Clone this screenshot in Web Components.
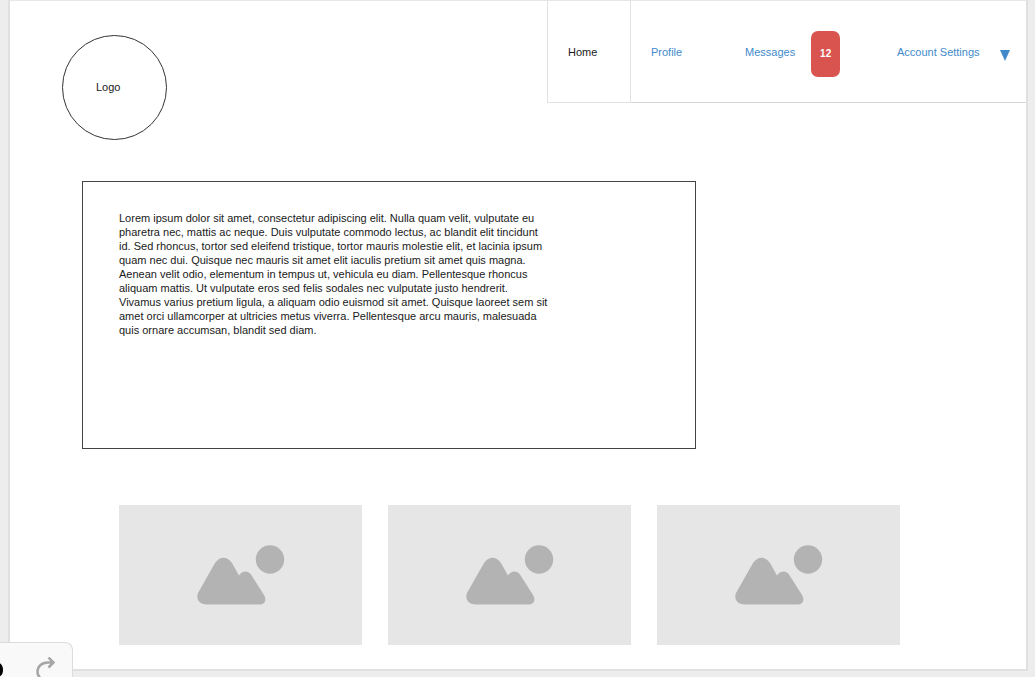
<!DOCTYPE html>
<html lang="en">
<head>
<meta charset="utf-8">
<title>Wireframe</title>
<style>
  body { margin: 0; background: #ededed; font: 11px/14px "Liberation Sans", Arial, sans-serif; color: #1a1a1a; }
</style>
</head>
<body>
<wire-sheet>
  <wire-header>
    <wire-logo>Logo</wire-logo>
    <wire-nav>
      <wire-tab href="#home" current>Home</wire-tab>
      <wire-tab href="#profile">Profile</wire-tab>
      <wire-tab href="#messages">Messages<wire-badge slot="extra">12</wire-badge></wire-tab>
      <wire-tab href="#account" menu>Account Settings</wire-tab>
    </wire-nav>
  </wire-header>
  <wire-panel>Lorem ipsum dolor sit amet, consectetur adipiscing elit. Nulla quam velit, vulputate eu pharetra nec, mattis ac neque. Duis vulputate commodo lectus, ac blandit elit tincidunt id. Sed rhoncus, tortor sed eleifend tristique, tortor mauris molestie elit, et lacinia ipsum quam nec dui. Quisque nec mauris sit amet elit iaculis pretium sit amet quis magna. Aenean velit odio, elementum in tempus ut, vehicula eu diam. Pellentesque rhoncus aliquam mattis. Ut vulputate eros sed felis sodales nec vulputate justo hendrerit. Vivamus varius pretium ligula, a aliquam odio euismod sit amet. Quisque laoreet sem sit amet orci ullamcorper at ultricies metus viverra. Pellentesque arcu mauris, malesuada quis ornare accumsan, blandit sed diam.</wire-panel>
  <wire-gallery>
    <wire-picture></wire-picture>
    <wire-picture></wire-picture>
    <wire-picture></wire-picture>
  </wire-gallery>
</wire-sheet>
<history-bar></history-bar>
<script>
const define = (name, html, setup) => customElements.define(name, class extends HTMLElement {
  constructor() {
    super();
    const template = document.createElement('template');
    template.innerHTML = html;
    this.attachShadow({ mode: 'open' }).append(template.content.cloneNode(true));
  }
  connectedCallback() { if (setup) setup(this); }
});

define('wire-sheet', `
  <style>
    :host { display: block; box-sizing: border-box; min-height: calc(100vh - 6px); margin: 0 7px 6px 8px;
      background: #fff; border: 2px solid #e0e0e0; border-top: 1px solid #e6e6e6; }
  </style>
  <slot></slot>`);

define('wire-header', `
  <style>
    :host { display: flex; justify-content: space-between; align-items: flex-start; }
  </style>
  <slot></slot>`);

define('wire-logo', `
  <style>
    :host { display: flex; align-items: center; box-sizing: border-box; width: 105px; height: 105px;
      margin: 34px 0 0 52px; padding: 0 0 2px 33px; border: 1px solid #333; border-radius: 50%; }
  </style>
  <slot></slot>`);

define('wire-nav', `
  <style>
    nav { display: grid; grid-template-columns: 84px 94px 152px 149px; height: 102px; }
  </style>
  <nav aria-label="Main"><slot></slot></nav>`);

define('wire-tab', `
  <style>
    :host { display: flex; box-sizing: border-box; align-items: center; padding-left: 20px; border-bottom: 1px solid #d5d5d5; }
    :host([current]) { border: 1px solid #e2e2e2; border-top: 0; }
    a { color: #428bca; text-decoration: none; white-space: nowrap; }
    :host([current]) a { color: #1a1a1a; }
    svg { display: none; width: 10px; height: 11px; margin: 8px 0 0 20px; fill: #428bca; }
    :host([menu]) svg { display: block; }
  </style>
  <a><slot></slot></a>
  <slot name="extra"></slot>
  <svg viewBox="0 0 10 11" aria-hidden="true"><path d="M0 0H10L5 11Z"/></svg>`,
  el => {
    const link = el.shadowRoot.querySelector('a');
    link.href = el.getAttribute('href');
    if (el.hasAttribute('current')) link.setAttribute('aria-current', 'page');
  });

define('wire-badge', `
  <style>
    :host { display: grid; place-items: center; width: 29px; height: 46px; margin: 4px 0 0 16px; border-radius: 7px;
      background: #d9534f; color: #fff; font-size: 10px; font-weight: bold; }
  </style>
  <span><slot></slot></span>`);

define('wire-panel', `
  <style>
    :host { display: block; box-sizing: border-box; width: 614px; max-width: 100%; min-height: 268px;
      margin: 41px 0 0 72px; padding: 29px 36px; border: 1px solid #444; }
    p { max-width: 430px; margin: 0; }
  </style>
  <p><slot></slot></p>`);

define('wire-gallery', `
  <style>
    :host { display: grid; grid-template-columns: repeat(3, 1fr); gap: 26px; margin: 56px 126px 24px 109px; }
  </style>
  <slot></slot>`);

define('wire-picture', `
  <style>
    :host { display: grid; place-items: center; height: 140px; background: #e6e6e6; }
    svg { width: 88px; height: 60px; fill: #b3b3b3; }
  </style>
  <svg viewBox="0 0 88 60" role="img" aria-label="Picture placeholder">
    <circle cx="73" cy="14.500" r="14.200"/>
    <path d="M18 18C23 11 30 11 35 18L42 30.500C45 25.500 51 25 54 29.500L67 50C70 55 68 59.500 62 59.500H10C1 59.500-1 53 1 48Z"/>
  </svg>`);

define('history-bar', `
  <style>
    :host { position: fixed; left: 0; bottom: 0; display: block; box-sizing: border-box; width: 73px; height: 35px;
      overflow: hidden; background: #f9f9f9; border: 1px solid #dcdcdc; border-width: 1px 1px 0 0; border-radius: 0 8px 0 0; }
    div { display: flex; gap: 32px; padding-top: 14px; }
    button { padding: 0; border: 0; background: none; }
    svg { display: block; fill: none; }
  </style>
  <div>
    <button aria-label="Undo"><svg width="4" height="24" viewBox="0 0 4 24"><path d="M-5 6.500C1 6.500 1.500 10 1.500 13S1 19-5 19" stroke="#000" stroke-width="3"/></svg></button>
    <button aria-label="Redo"><svg width="20" height="24" viewBox="0 0 20 24" stroke="#a6a6a6" stroke-width="2.500"><path d="M17 5.500H12C5 5.500 1.500 10 1.500 15C1.500 18 3 20 5 22M12.500 0.500L17.500 5.500L12.500 10.500"/></svg></button>
  </div>`);
</script>
</body>
</html>
